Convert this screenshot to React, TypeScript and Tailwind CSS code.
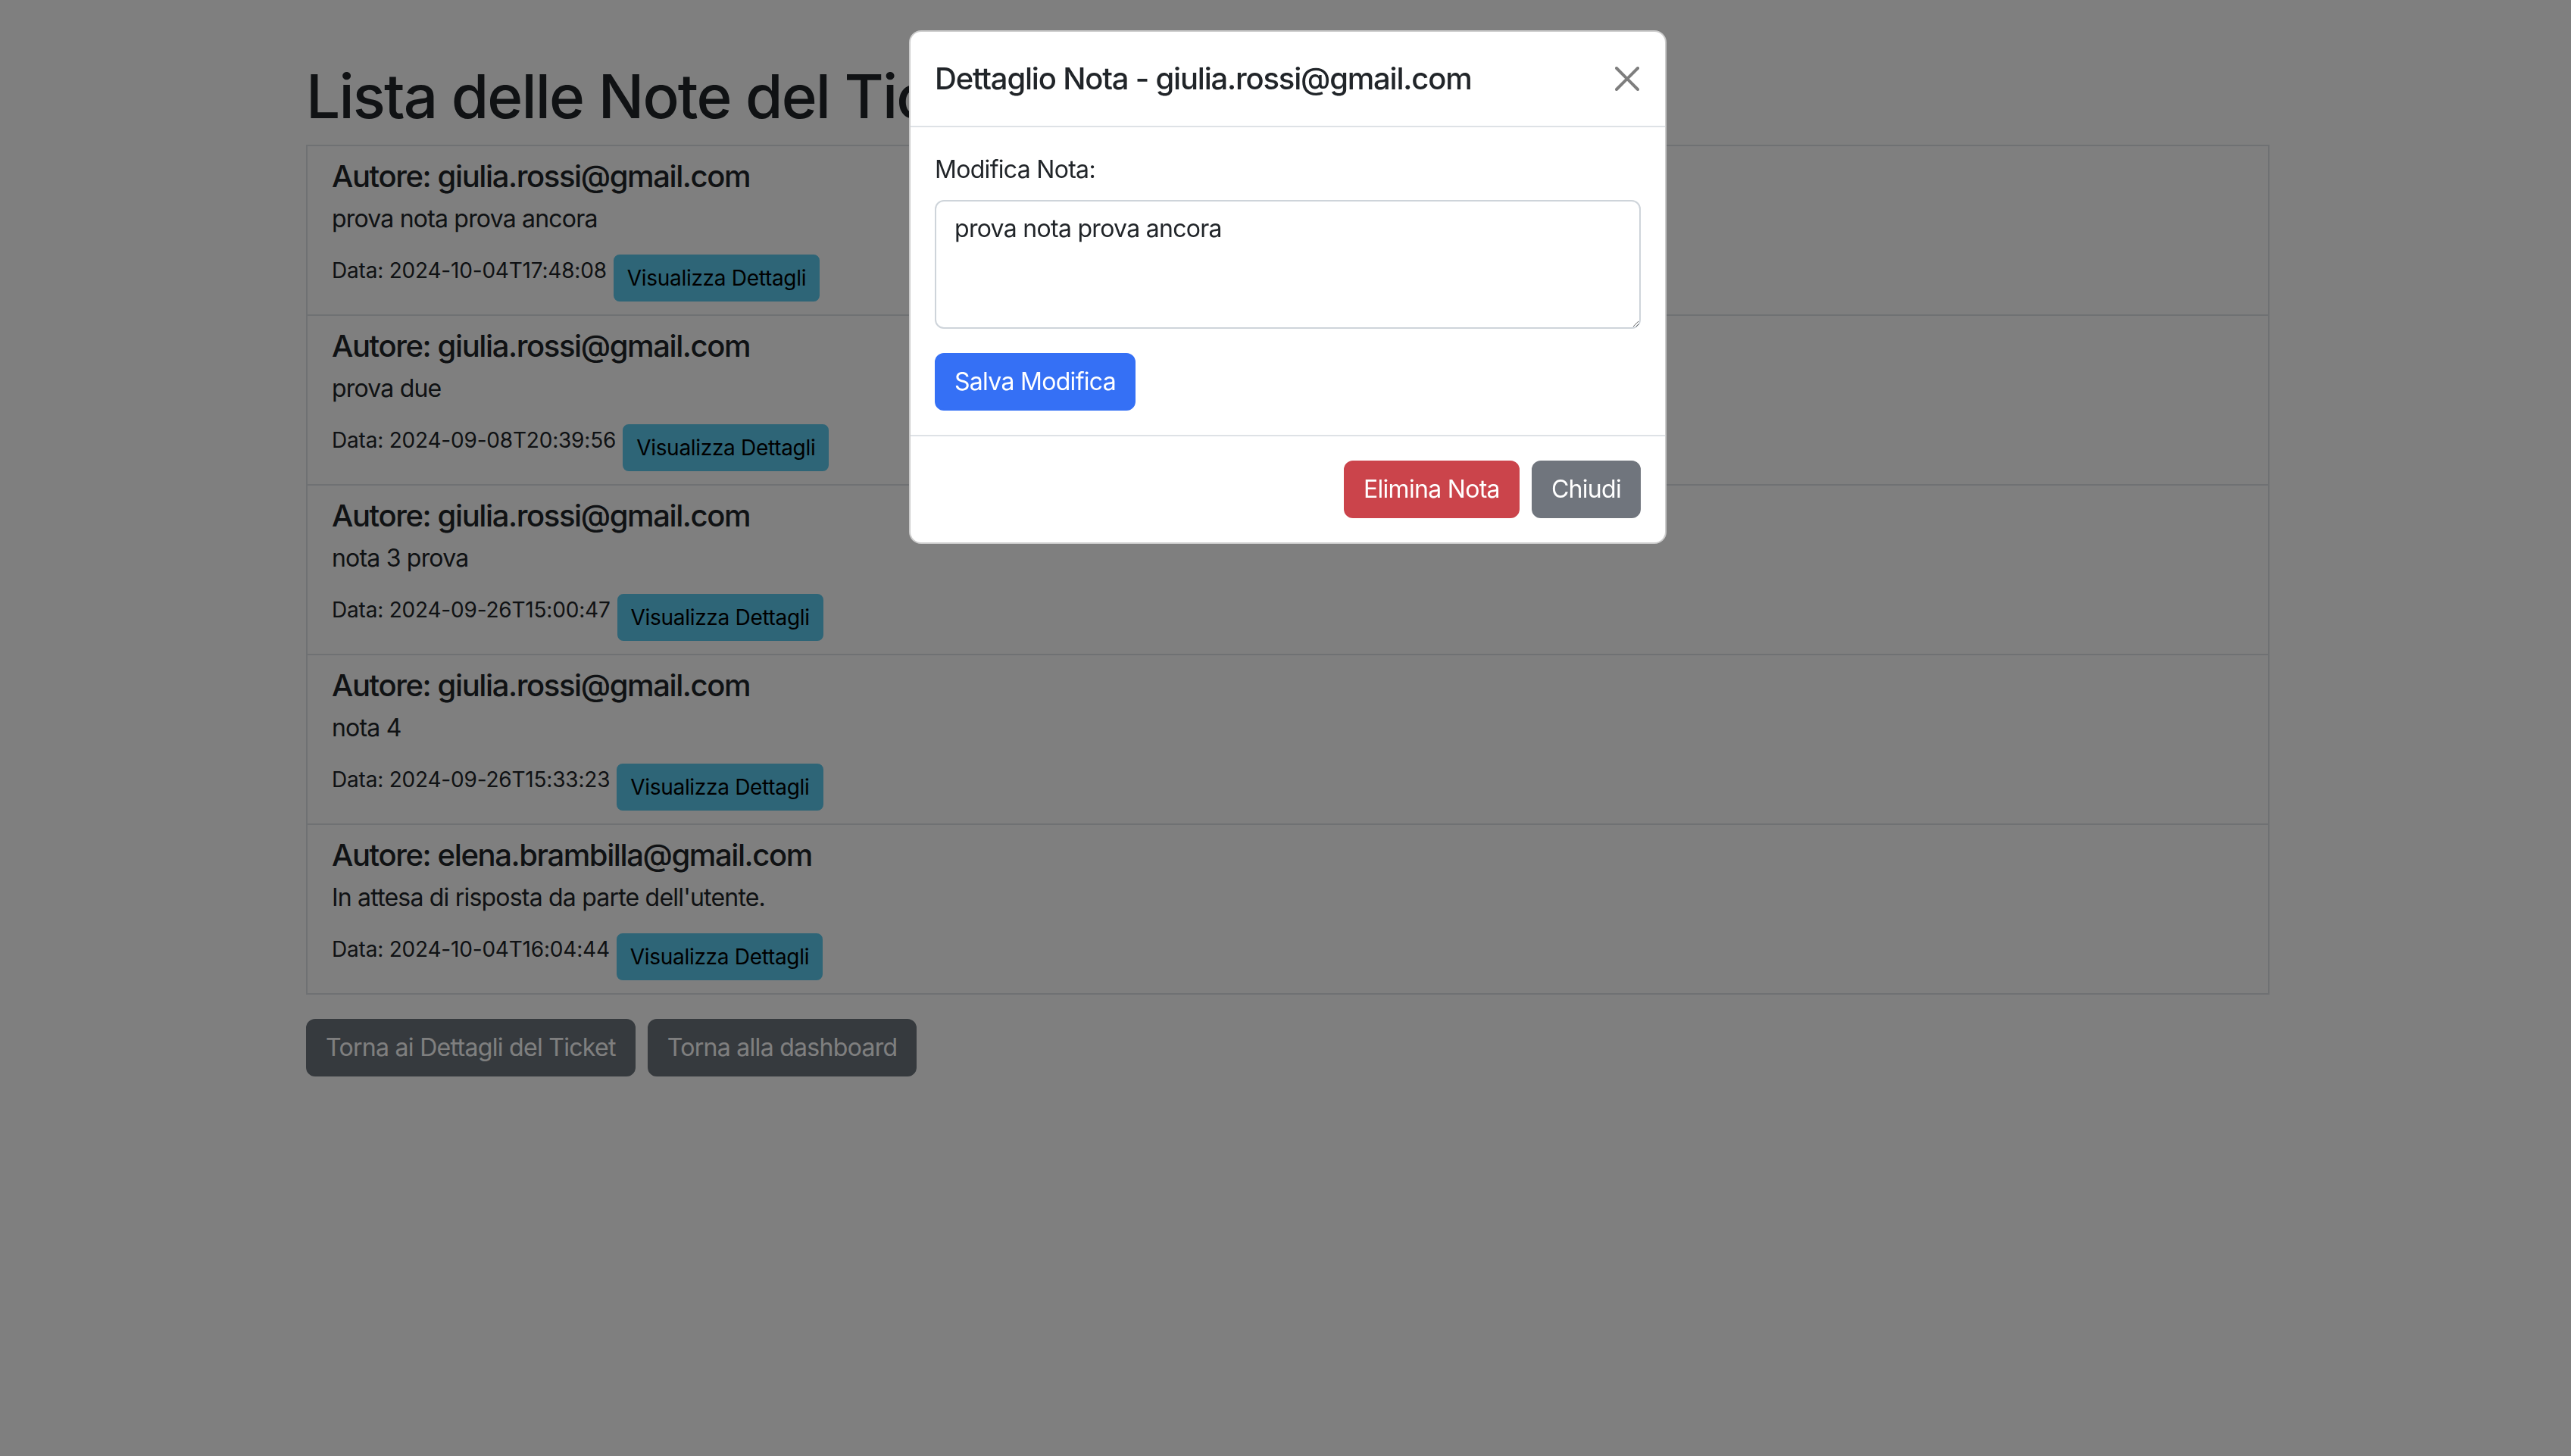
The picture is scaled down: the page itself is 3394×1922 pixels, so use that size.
import React from 'react'

const note = [
    { autore: 'giulia.rossi@gmail.com', testo: 'prova nota prova ancora', data: '2024-10-04T17:48:08' },
    { autore: 'giulia.rossi@gmail.com', testo: 'prova due', data: '2024-09-08T20:39:56' },
    { autore: 'giulia.rossi@gmail.com', testo: 'nota 3 prova', data: '2024-09-26T15:00:47' },
    { autore: 'giulia.rossi@gmail.com', testo: 'nota 4', data: '2024-09-26T15:33:23' },
    { autore: 'elena.brambilla@gmail.com', testo: "In attesa di risposta da parte dell'utente.", data: '2024-10-04T16:04:44' },
]

function Chiudi() {
    return (
        <svg viewBox="0 0 16 16" className="w-[32px] h-[32px] opacity-50">
            <path
                fill="#000"
                d="M.293.293a1 1 0 0 1 1.414 0L8 6.586 14.293.293a1 1 0 1 1 1.414 1.414L9.414 8l6.293 6.293a1 1 0 0 1-1.414 1.414L8 9.414l-6.293 6.293a1 1 0 0 1-1.414-1.414L6.586 8 .293 1.707a1 1 0 0 1 0-1.414z"
            />
        </svg>
    )
}

export default function App() {
    return (
        <div className="relative min-h-screen w-full bg-white text-[#212529] font-[Inter,sans-serif]">
            {/* pagina sotto al modale */}
            <div className="ml-[404px] w-[2592px] pt-[79px]">
                <h1 className="text-[80px] leading-[96px] font-medium tracking-[-1.85px] mb-[16px]">Lista delle Note del Ticket</h1>
                <div className="border-2 border-[#dee2e6]">
                    {note.map((n, i) => (
                        <div key={i} className={`px-[32px] py-[16px] ${i > 0 ? 'border-t-2 border-[#dee2e6]' : ''}`}>
                            <h5 className="text-[40px] leading-[48px] font-medium tracking-[-1.4px] mb-[8px]">Autore: {n.autore}</h5>
                            <p className="text-[32px] leading-[48px] tracking-[-0.8px] mb-[8px]">{n.testo}</p>
                            <div className="flex items-start gap-[9px] h-[78px] pt-[15px]">
                                <small className="text-[28px] leading-[42px] tracking-[-0.2px]">Data: {n.data}</small>
                                <button className="bg-[#5ccaee] text-black text-[28px] leading-[42px] tracking-[-0.3px] px-[16px] py-[8px] border-2 border-[#5ccaee] rounded-[8px]">
                                    Visualizza Dettagli
                                </button>
                            </div>
                        </div>
                    ))}
                </div>
                <div className="flex gap-[16px] mt-[32px]">
                    <button className="bg-[#6c757d] text-white text-[32px] leading-[48px] tracking-[-0.7px] px-[24px] py-[12px] border-2 border-[#6c757d] rounded-[12px]">
                        Torna ai Dettagli del Ticket
                    </button>
                    <button className="bg-[#6c757d] text-white text-[32px] leading-[48px] tracking-[-0.7px] px-[24px] py-[12px] border-2 border-[#6c757d] rounded-[12px]">
                        Torna alla dashboard
                    </button>
                </div>
            </div>

            {/* sfondo del modale */}
            <div className="fixed inset-0 bg-black/50" />

            {/* modale */}
            <div className="absolute left-[1200px] top-[40px] w-[1000px] bg-white border-2 border-black/20 rounded-[16px]">
                <div className="flex items-center justify-between px-[32px] py-[32px] border-b-2 border-[#dee2e6]">
                    <h5 className="text-[40px] leading-[60px] font-medium tracking-[-1.2px]">Dettaglio Nota - giulia.rossi@gmail.com</h5>
                    <div className="mr-[2px]">
                        <Chiudi />
                    </div>
                </div>
                <div className="p-[32px]">
                    <label className="block text-[32px] leading-[48px] tracking-[-0.7px] mb-[16px]">Modifica Nota:</label>
                    <textarea
                        defaultValue="prova nota prova ancora"
                        className="block w-full h-[170px] border-2 border-[#ced4da] rounded-[12px] px-[24px] py-[12px] text-[32px] leading-[48px] tracking-[-0.7px] text-[#212529] mb-[32px] outline-none"
                    />
                    <button className="bg-[#3570f5] text-white text-[32px] leading-[48px] tracking-[-0.7px] px-[24px] py-[12px] border-2 border-[#3570f5] rounded-[12px]">
                        Salva Modifica
                    </button>
                </div>
                <div className="flex justify-end px-[24px] py-[24px] border-t-2 border-[#dee2e6]">
                    <div className="flex gap-[16px] m-[8px]">
                        <button className="bg-[#cb444b] text-white text-[32px] leading-[48px] tracking-[-0.7px] px-[24px] py-[12px] border-2 border-[#cb444b] rounded-[12px]">
                            Elimina Nota
                        </button>
                        <button className="bg-[#70757d] text-white text-[32px] leading-[48px] tracking-[-0.7px] px-[24px] py-[12px] border-2 border-[#70757d] rounded-[12px]">
                            Chiudi
                        </button>
                    </div>
                </div>
            </div>
        </div>
    )
}
